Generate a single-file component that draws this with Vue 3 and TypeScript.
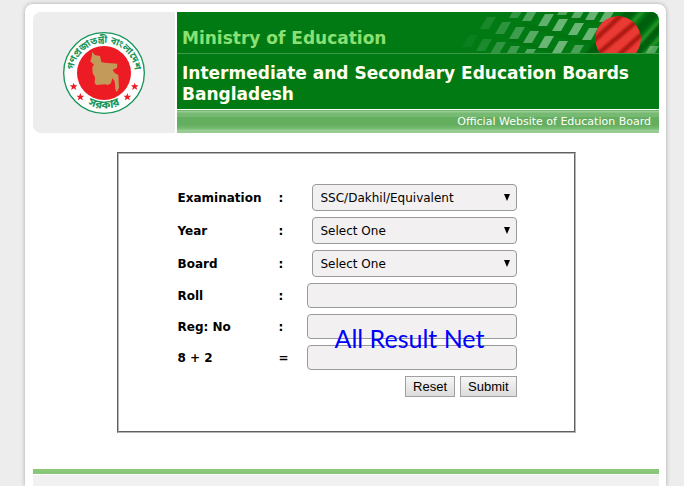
<script setup lang="ts">
import { reactive } from 'vue'

interface SelectField {
  id: 'exam' | 'year' | 'board'
  label: string
  options: string[]
}
interface TextField {
  id: 'roll' | 'reg' | 'sum'
  label: string
  mark: string
}

const selects: SelectField[] = [
  { id: 'exam', label: 'Examination', options: ['SSC/Dakhil/Equivalent'] },
  { id: 'year', label: 'Year', options: ['Select One'] },
  { id: 'board', label: 'Board', options: ['Select One'] },
]
const inputs: TextField[] = [
  { id: 'roll', label: 'Roll', mark: ':' },
  { id: 'reg', label: 'Reg: No', mark: ':' },
  { id: 'sum', label: '8 + 2', mark: '=' },
]

const initial = () => ({
  exam: 'SSC/Dakhil/Equivalent',
  year: 'Select One',
  board: 'Select One',
  roll: '',
  reg: '',
  sum: '',
})
const form = reactive(initial())
const reset = () => Object.assign(form, initial())

// Centres of the light tiles woven into the banner, with their opacity
const tiles: [number, number, number][] = [
  [126, -3, 0.4], [140, 0, 0.45], [154, 2, 0.5], [168, 4, 0.5],
  [78, 0, 0.25], [91, 3, 0.38], [107, 8, 0.48], [121, 13, 0.52], [137, 17, 0.52], [151, 22, 0.52],
  [49, 11, 0.12], [64, 16, 0.22], [78, 21, 0.3], [92, 25, 0.42], [107, 30, 0.52], [121, 35, 0.52], [137, 39, 0.35],
  [31, 29, 0.05], [45, 33, 0.14], [59, 36, 0.24], [73, 40, 0.3], [89, 43, 0.4], [212, 40, 0.4],
]
const star = '0,-12 3,-4 11,-4 5,2 8,10 0,5 -8,10 -5,2 -11,-4 -3,-4'
const stars: [number, number][] = [[41, 173], [61, 204], [224, 173], [202, 204]]
</script>

<template>
  <div class="page">
    <header class="header">
      <div class="emblem">
        <svg class="seal" viewBox="9 9 246 246" role="img" aria-label="Government seal">
          <circle cx="132" cy="132" r="121" fill="#fff" stroke="#17965a" stroke-width="4" />
          <circle cx="132" cy="132" r="81" fill="#ed1c24" />
          <path
            d="M97 68 104 78 120 81 124 99 134 101 172 104 171 116 158 123 164 132 175 138 177 176 170 190 166 180 164 156 157 148 153 162 145 168 135 166 110 168 104 163 105 145 98 132 97 114 102 107 91 97 95 83Z"
            fill="#c49a5a"
          />
          <path id="arc-top" d="M41 147A92 92 0 1 1 223 147" fill="none" />
          <path id="arc-bottom" d="M56 207A107 107 0 0 0 208 207" fill="none" />
          <text class="seal-text"><textPath href="#arc-top" startOffset="50%">গণপ্রজাতন্ত্রী বাংলাদেশ</textPath></text>
          <text class="seal-text seal-text-large"><textPath href="#arc-bottom" startOffset="50%">সরকার</textPath></text>
          <polygon v-for="([x, y], i) in stars" :key="i" :points="star" :transform="`translate(${x} ${y})`" fill="#ed1c24" />
        </svg>
      </div>
      <div class="titles">
        <div class="ministry">
          <span>Ministry of Education</span>
          <svg class="weave" viewBox="0 0 220 41" aria-hidden="true">
            <defs>
              <clipPath id="ball"><circle cx="179" cy="27" r="23" /></clipPath>
              <filter id="soft"><feGaussianBlur stdDeviation="1" /></filter>
            </defs>
            <g filter="url(#soft)" fill="none" stroke="#045f0a">
              <path d="M100 -4 170 14M84 12 160 34M70 27 130 44" stroke-width="3" opacity=".3" />
              <path d="M148 46 195 -4M170 50 222 -6M188 50 232 2" stroke-width="9" />
              <path d="M160 46 207 -4M183 50 230 -2M200 48 230 16" stroke="#2a962b" stroke-width="3" />
            </g>
            <path v-for="([x, y, o], i) in tiles" :key="i" d="M-1 -6H8L1 6H-8Z" :transform="`translate(${x} ${y})`" fill="#cdeccf" :opacity="o" />
            <g clip-path="url(#ball)">
              <circle cx="179" cy="27" r="23" fill="#e93a34" />
              <path d="M148 35 188 -2M154 46 204 4M172 50 214 12" stroke="#a51209" stroke-width="4" filter="url(#soft)" />
            </g>
          </svg>
        </div>
        <h1>Intermediate and Secondary Education Boards Bangladesh</h1>
        <p class="official">Official Website of Education Board</p>
      </div>
    </header>

    <main>
      <form class="panel" @submit.prevent @reset.prevent="reset">
        <div v-for="f in selects" :key="f.id" class="row">
          <label :for="f.id">{{ f.label }}</label>
          <b>:</b>
          <div class="select">
            <select :id="f.id" v-model="form[f.id]">
              <option v-for="o in f.options" :key="o">{{ o }}</option>
            </select>
            <svg class="arrow" viewBox="0 0 8 7" aria-hidden="true"><path d="M1 0H7L4 7Z" /></svg>
          </div>
        </div>
        <div v-for="f in inputs" :key="f.id" class="row">
          <label :for="f.id">{{ f.label }}</label>
          <b>{{ f.mark }}</b>
          <input :id="f.id" v-model="form[f.id]" type="text" />
        </div>
        <div class="actions">
          <button type="reset">Reset</button>
          <button type="submit">Submit</button>
        </div>
        <span class="watermark">All Result Net</span>
      </form>
    </main>
    <footer class="footer"></footer>
  </div>
</template>

<style>
body {
  background: #ededed;
}
</style>

<style scoped>
.page {
  box-sizing: border-box;
  min-height: calc(100vh - 4px);
  margin: 4px 18px 0 25px;
  padding: 8px 7px 0 8px;
  display: flex;
  flex-direction: column;
  background: #fff;
  border-radius: 8px 8px 0 0;
  box-shadow: 0 0 4px rgba(0, 0, 0, 0.3);
  font: 12px/16px Verdana, "DejaVu Sans", sans-serif;
  color: #000;
}
.header {
  display: flex;
  gap: 2px;
}
.emblem {
  flex: 0 0 142px;
  display: flex;
  align-items: center;
  justify-content: center;
  background: #ededed;
  border-radius: 8px 0 0 8px;
}
.seal {
  width: 82px;
  height: 82px;
}
.seal-text {
  font: bold 29px "Noto Sans Bengali", "Noto Sans", sans-serif;
  fill: #17965a;
  text-anchor: middle;
}
.seal-text-large {
  font-size: 34px;
}
.titles {
  flex: 1;
  background: #017a14;
  border-radius: 0 8px 0 0;
  overflow: hidden;
}
.ministry {
  display: flex;
  justify-content: space-between;
  height: 41px;
  padding-left: 5px;
  border-bottom: 1px solid #3d9a49;
  font-size: 17px;
  font-weight: bold;
  line-height: 52px;
  color: #8be073;
}
.weave {
  width: 220px;
  height: 41px;
}
h1 {
  margin: 0;
  padding: 9px 5px 4px;
  font-size: 17px;
  line-height: 21px;
  color: #fffff2;
}
.official {
  margin: 0;
  padding-right: 8px;
  border-top: 1px solid #fff;
  background: linear-gradient(#6fb56a 0 1px, #98cc92 1px 2px, #76b972 3px 7px, #64ae60 7px 15px, #7abd75 19px, #98cc92 20px);
  font-size: 11px;
  line-height: 23px;
  text-align: right;
  color: #fff;
}
main {
  display: flex;
  justify-content: center;
  padding: 19px 0 36px;
}
.panel {
  position: relative;
  display: flex;
  flex-direction: column;
  gap: 6px;
  padding: 30px 57px 34px 59px;
  border: 2px groove #b4b4b4;
}
.row {
  display: grid;
  grid-template-columns: 101px 28px 210px;
  align-items: center;
  font-weight: bold;
}
.select {
  position: relative;
  margin-left: 5px;
}
select,
input {
  display: block;
  box-sizing: border-box;
  width: 100%;
  height: 25px;
  padding: 0 8px;
  border: 1px solid #999;
  border-radius: 4px;
  background: #f2f0f1;
  color: #000;
  font: 12px Verdana, "DejaVu Sans", sans-serif;
  appearance: none;
}
select {
  height: 27px;
}
.arrow {
  position: absolute;
  right: 6px;
  top: 10px;
  width: 8px;
  height: 7px;
}
.actions {
  display: flex;
  justify-content: flex-end;
  gap: 5px;
}
button {
  height: 21px;
  padding: 0 7px;
  border: 1px solid #a0a0a0;
  background: linear-gradient(#f6f6f6, #dcdcdc);
  font: 13px "Liberation Sans", sans-serif;
  color: #000;
}
.watermark {
  position: absolute;
  left: 216px;
  top: 168px;
  font: 25px/32px Lato, sans-serif;
  color: #00f;
  pointer-events: none;
}
.footer {
  flex: 1;
  min-height: 11px;
  border-top: 5px solid #88c878;
  box-shadow: inset 0 1px #fff;
  background: #f1f1f1;
}
</style>
